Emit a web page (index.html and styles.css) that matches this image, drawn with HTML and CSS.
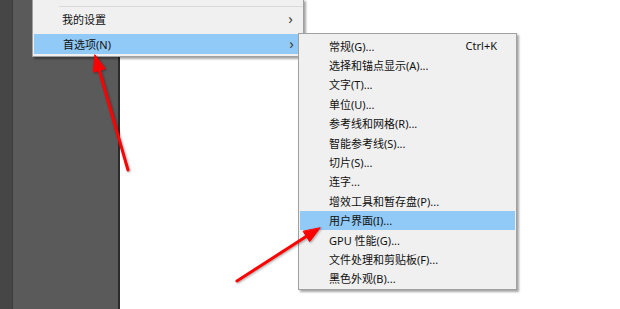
FILE: index.html
```html
<!DOCTYPE html>
<html lang="zh-CN">
<head>
  <meta charset="UTF-8" />
  <title>首选项菜单</title>
  <link rel="stylesheet" href="styles.css">
</head>
<body>

  <div class="app">
    <div class="edge"></div>
    <div class="panel"></div>
    <div class="divider"></div>
    <div class="canvas"></div>
  </div>

  <div class="menu main-menu">
    <div class="sep"></div>
    <div class="item">我的设置<span class="chev">›</span></div>
    <div class="item active">首选项(N)<span class="chev">›</span></div>
  </div>

  <div class="menu sub-menu">
    <div class="item">常规(G)...<span class="key">Ctrl+K</span></div>
    <div class="item">选择和锚点显示(A)...</div>
    <div class="item">文字(T)...</div>
    <div class="item">单位(U)...</div>
    <div class="item">参考线和网格(R)...</div>
    <div class="item">智能参考线(S)...</div>
    <div class="item">切片(S)...</div>
    <div class="item">连字...</div>
    <div class="item">增效工具和暂存盘(P)...</div>
    <div class="item active">用户界面(I)...</div>
    <div class="item">GPU 性能(G)...</div>
    <div class="item">文件处理和剪贴板(F)...</div>
    <div class="item">黑色外观(B)...</div>
  </div>

  <!-- red annotation arrows -->
  <svg class="arrows" width="620" height="309" viewBox="0 0 620 309">
    <g fill="#f00" stroke="#f00" stroke-linecap="round" stroke-linejoin="round">
      <line x1="128" y1="170" x2="98" y2="66" stroke-width="3" />
      <polygon points="95,55 105.2,68.7 93.6,72.1" stroke-width="1" />
      <line x1="237" y1="281" x2="310" y2="234" stroke-width="3" />
      <polygon points="320,228 309.7,241.7 303.3,231.5" stroke-width="1" />
    </g>
  </svg>

</body>
</html>
```

FILE: styles.css
```css
* {
  box-sizing: border-box;
}

body {
  margin: 0;
  width: 620px;
  height: 309px;
  overflow: hidden;
  position: relative;
  font-family: "Noto Sans", "Noto Sans CJK SC", sans-serif;
  font-size: 11px;
  color: #111;
}

.app {
  display: flex;
  height: 309px;
}

.edge {
  width: 13px;
  background: #464646;
  border-right: 1px solid #3c3c3c;
}

.panel {
  width: 105px;
  background: #5a5a5a;
}

.divider {
  width: 2px;
  background: #2b2b2b;
}

.canvas {
  flex: 1;
  background: #fff;
}

.menu {
  position: absolute;
  background: #f0f0f0;
  border: 1px solid #a0a0a0;
  box-shadow: 2px 2px 2px rgba(0, 0, 0, 0.35);
}

.item {
  display: flex;
  align-items: center;
  justify-content: space-between;
  white-space: nowrap;
}

.item.active {
  background: #91c9f7;
}

.main-menu {
  left: 32px;
  top: -1px;
  width: 272px;
  height: 58px;
  padding: 6px 0 1px;
}

.main-menu .sep {
  height: 1px;
  margin-left: 26px;
  background: #d9d9d9;
}

.main-menu .item {
  height: 24px;
  padding: 0 10px 0 29px;
}

.main-menu .item.active {
  height: 20px;
  margin: 3px 0 0 1px;
  padding-right: 9px;
}

.chev {
  font-size: 15px;
  color: #444;
  line-height: 1;
  margin-top: -2px;
}

.sub-menu {
  left: 298px;
  top: 33px;
  width: 219px;
  height: 257px;
  padding: 2px 1px;
}

.sub-menu .item {
  height: 19.4px;
  padding: 0 18px 0 29px;
}

.key {
  color: #111;
}

.arrows {
  position: absolute;
  left: 0;
  top: 0;
  pointer-events: none;
  filter: drop-shadow(1px 1px 1px rgba(0, 0, 0, 0.35));
}
```
